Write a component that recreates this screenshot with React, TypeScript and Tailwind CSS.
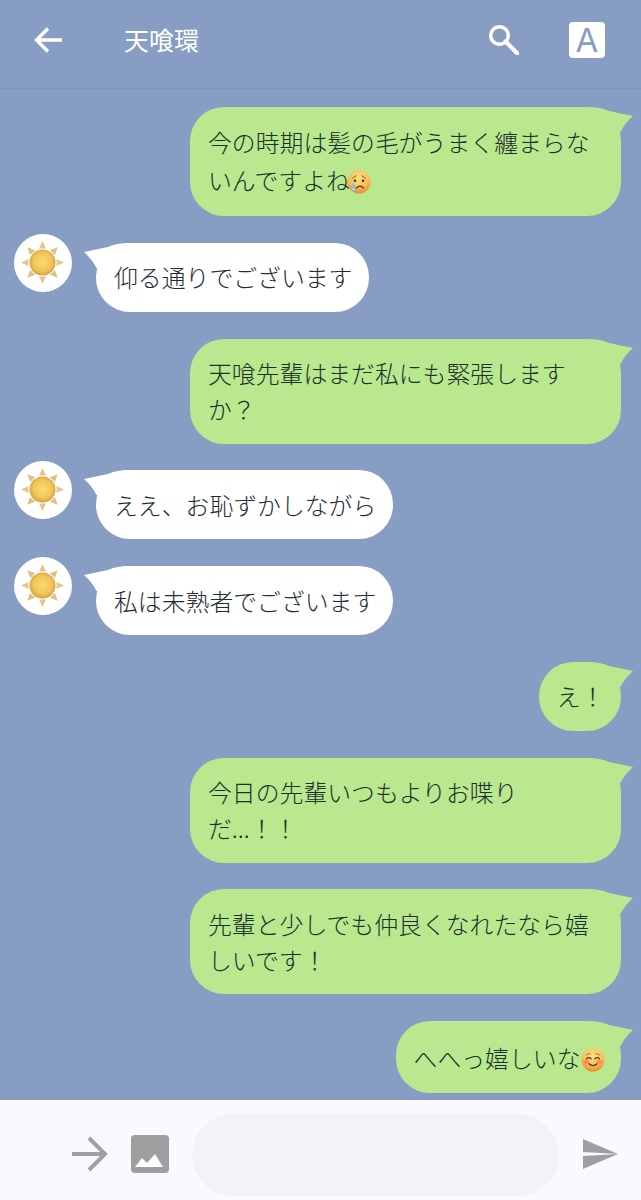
function CryEmoji() {
  return (
    <svg viewBox="0 0 24 24" className="ml-[-3px] inline-block h-[24px] w-[24px] align-[-4px]">
      <defs>
        <radialGradient id="cry" cx="50%" cy="30%" r="72%">
          <stop offset="0%" stopColor="#fde07f" />
          <stop offset="60%" stopColor="#f9bf5a" />
          <stop offset="100%" stopColor="#ec8435" />
        </radialGradient>
      </defs>
      <circle cx="12" cy="12" r="11.5" fill="url(#cry)" />
      <path d="M5.4 8.4 Q7 6.4 9.2 5.8 M14.8 5.8 Q17 6.4 18.6 8.4" stroke="#7a4d1c" strokeWidth="0.9" fill="none" strokeLinecap="round" />
      <circle cx="8" cy="10.8" r="1.25" fill="#40301f" />
      <circle cx="16" cy="10.8" r="1.25" fill="#40301f" />
      <path d="M9.5 18 Q13 14.2 16.5 18" stroke="#5e3516" strokeWidth="1.2" fill="none" strokeLinecap="round" />
      <path d="M6.5 13 Q3.6 17.4 4.4 19.6 Q6.4 22 8.4 19.6 Q9.2 17.4 6.5 13Z" fill="#84bfec" />
      <path d="M5.6 18.4 Q6 20 7.2 20.2" stroke="#e4f3fd" strokeWidth="0.8" fill="none" />
    </svg>
  );
}

function SmileEmoji() {
  return (
    <svg viewBox="0 0 24 24" className="inline-block h-[24px] w-[24px] align-[-4px]">
      <defs>
        <radialGradient id="smile" cx="50%" cy="30%" r="72%">
          <stop offset="0%" stopColor="#fde07f" />
          <stop offset="60%" stopColor="#f9bf5a" />
          <stop offset="100%" stopColor="#ec8435" />
        </radialGradient>
      </defs>
      <circle cx="12" cy="12" r="11.5" fill="url(#smile)" />
      <ellipse cx="5.4" cy="13.8" rx="3" ry="2" fill="#f27f55" opacity="0.75" />
      <ellipse cx="18.6" cy="13.8" rx="3" ry="2" fill="#f27f55" opacity="0.75" />
      <path d="M5.4 10.8 Q7.8 8.4 10.2 10.8 M13.8 10.8 Q16.2 8.4 18.6 10.8" stroke="#4f3316" strokeWidth="1.2" fill="none" strokeLinecap="round" />
      <path d="M8 15.8 Q12 19.6 16 15.8" stroke="#4f3316" strokeWidth="1.2" fill="none" strokeLinecap="round" />
      <path d="M5.5 6.8 Q7.5 5 9.5 5.6 M14.5 5.6 Q16.5 5 18.5 6.8" stroke="#8a5a20" strokeWidth="0.8" fill="none" strokeLinecap="round" />
    </svg>
  );
}

function Sun() {
  const rays = [0, 45, 90, 135, 180, 225, 270, 315];
  return (
    <svg viewBox="0 0 58 58" className="h-[58px] w-[58px]">
      <defs>
        <radialGradient id="sun" cx="50%" cy="48%" r="55%">
          <stop offset="0%" stopColor="#f8da72" />
          <stop offset="65%" stopColor="#f1c659" />
          <stop offset="100%" stopColor="#d4953a" />
        </radialGradient>
      </defs>
      <circle cx="29" cy="29" r="29" fill="#ffffff" />
      {rays.map((a) => (
        <polygon key={a} points="28.5,7 25,14.5 32,14.5" fill={a % 90 === 0 ? "#dfca8b" : "#dcc27e"} transform={`rotate(${a} 28.5 28.5)`} />
      ))}
      <circle cx="28.5" cy="28.5" r="13" fill="url(#sun)" />
    </svg>
  );
}

type Line = React.ReactNode;

function Bubble({ side, lines }: { side: "l" | "r"; lines: Line[] }) {
  const isRight = side === "r";
  return (
    <div
      className={
        isRight
          ? "relative rounded-[34px] bg-[#b9e88f] py-[16.5px] pl-[18px] pr-[16.5px] text-[23.85px] font-light leading-[36px] text-[#1c2f2b]"
          : "relative rounded-[34px] bg-white py-[16.5px] pl-[18px] pr-[16.5px] text-[23.85px] font-light leading-[36px] text-[#1e2c36]"
      }
    >
      {isRight ? (
        <svg viewBox="0 0 46 26" className="absolute right-[-12px] top-0 h-[26px] w-[46px]">
          <path d="M0 0 Q14 0 22 4 L46 9 Q38 16 33.5 25 L0 25Z" fill="#b9e88f" />
        </svg>
      ) : (
        <svg viewBox="0 0 46 26" className="absolute left-[-12px] top-0 h-[26px] w-[46px]">
          <path d="M46 0 Q32 0 24 4 L0 9 Q8 16 12.5 25 L46 25Z" fill="#ffffff" />
        </svg>
      )}
      <div className="relative">
        {lines.map((l, i) => (
          <div key={i} className="whitespace-nowrap">
            {l}
          </div>
        ))}
      </div>
    </div>
  );
}

function Right({ lines, w }: { lines: Line[]; w?: boolean }) {
  return (
    <div className="flex justify-end pr-[20px]">
      <div className={w ? "w-[431px]" : ""}>
        <Bubble side="r" lines={lines} />
      </div>
    </div>
  );
}

function Left({ text }: { text: string }) {
  return (
    <div className="flex items-start pl-[14px]">
      <div className="mt-[-9px] h-[58px] w-[58px] shrink-0">
        <Sun />
      </div>
      <div className="ml-[24px]">
        <Bubble side="l" lines={[text]} />
      </div>
    </div>
  );
}

export default function App() {
  return (
    <div
      className="flex h-[1200px] w-[641px] flex-col overflow-hidden bg-[#889dc3]"
      style={{ fontFamily: '"Noto Sans CJK JP", sans-serif' }}
    >
      <header className="flex h-[89px] shrink-0 items-center border-b border-[#7f94ba] pb-[8px] pl-[34px] pr-[36px] text-white">
        <svg viewBox="0 0 28 26" className="h-[26px] w-[28px]" fill="none" stroke="#ffffff" strokeWidth="3.4">
          <path d="M28 13 H3 M14 1.5 L2.5 13 L14 24.5" />
        </svg>
        <div className="ml-[62px] mt-[-3px] text-[25px] font-normal leading-[32px] text-white">天喰環</div>
        <svg viewBox="0 0 30 30" className="ml-auto h-[30px] w-[30px]" fill="none" stroke="#ffffff">
          <circle cx="10.5" cy="10.5" r="8.8" strokeWidth="3.4" />
          <path d="M16.5 16.5 L28.5 28.5" strokeWidth="4.2" strokeLinecap="round" />
        </svg>
        <div
          className="ml-[50px] flex h-[36px] w-[36px] items-center justify-center rounded-[4px] bg-white text-[33px] font-normal leading-none text-[#889dc3]"
          style={{ fontFamily: "Inter, sans-serif" }}
        >
          A
        </div>
      </header>

      <main className="flex min-h-0 flex-1 flex-col gap-[26.75px] overflow-hidden pt-[18px]">
        <Right
          w
          lines={[
            <span className="block">今の時期は髪の毛がうまく纏まらな</span>,
            <span className="block leading-[40px]">
              いんですよね
              <CryEmoji />
            </span>,
          ]}
        />
        <Left text="仰る通りでございます" />
        <Right w lines={["天喰先輩はまだ私にも緊張します", "か？"]} />
        <Left text="ええ、お恥ずかしながら" />
        <Left text="私は未熟者でございます" />
        <Right lines={["え！"]} />
        <Right w lines={["今日の先輩いつもよりお喋り", "だ...！！"]} />
        <Right w lines={["先輩と少しでも仲良くなれたなら嬉", "しいです！"]} />
        <Right
          lines={[
            <span className="block leading-[39px]">
              へへっ嬉しいな
              <SmileEmoji />
            </span>,
          ]}
        />
      </main>

      <footer className="flex h-[100px] shrink-0 items-center bg-[#f9faff] pl-[72px] pr-[22px] pt-[10px]">
        <svg viewBox="0 0 36 36" className="mt-[-2px] h-[36px] w-[36px]" fill="none" stroke="#a0a0a0" strokeWidth="4">
          <path d="M0 18 H33 M17 2 L33 18 L17 34" />
        </svg>
        <svg viewBox="0 0 38 38" className="ml-[23px] mt-[-2px] h-[38px] w-[38px]">
          <rect width="38" height="38" rx="4" fill="#9f9f9f" />
          <path d="M4 32 L11 23 L16 28 L24 19 L32 32Z" fill="#ffffff" />
        </svg>
        <div className="ml-[23px] h-[82px] w-[367px] rounded-[41px] bg-[#f2f3f7]" />
        <svg viewBox="0 0 36 36" className="ml-auto mt-[-2px] h-[36px] w-[36px]">
          <path d="M0 3 L35 18 L0 16Z M0 20 L35 18 L0 33Z" fill="#9f9f9f" />
        </svg>
      </footer>
    </div>
  );
}
